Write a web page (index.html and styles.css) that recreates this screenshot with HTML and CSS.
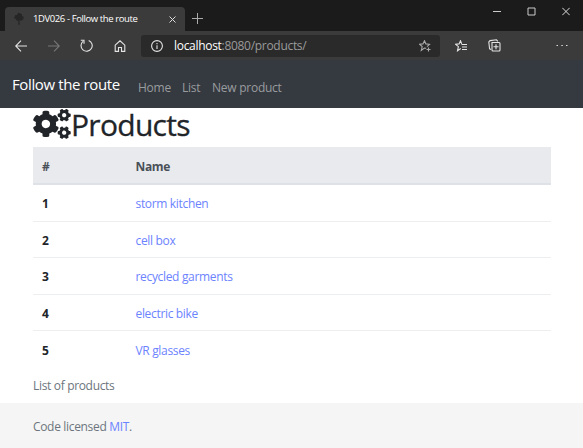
FILE: index.html
```
<!DOCTYPE html>
<html lang="en">
<head>
<meta charset="utf-8">
<title>1DV026 - Follow the route</title>
<link rel="stylesheet" href="styles.css">
</head>
<body>
<div class="tabs">
  <div class="tab">
    <svg class="favicon" width="12" height="14" viewBox="0 0 12 14"><path d="M5 1h2l1 1h1v2l2 1-1 1 1 1-2 1-1 1-1.5-1v3l.5 1-1 1-1-1 .5-1-.5-2-2-1v-1l-2-1 1-2V3h2z" fill="#262626"/></svg>
    <span class="tab-title">1DV026 - Follow the route</span>
    <svg class="tab-close" width="7" height="7" viewBox="0 0 7 7"><path d="M.5.5l6 6m0-6l-6 6" stroke="#ddd" fill="none"/></svg>
  </div>
  <svg class="plus" width="11" height="11" viewBox="0 0 11 11"><path d="M5.5 0v11M0 5.5h11" stroke="#aaa"/></svg>
  <div class="window-buttons">
    <svg width="8" height="9" viewBox="0 0 8 9"><path d="M0 4.5h8" stroke="#ccc"/></svg>
    <svg width="9" height="9" viewBox="0 0 9 9"><path d="M1 1h7v7H1z" stroke="#ccc" fill="none"/></svg>
    <svg width="8" height="9" viewBox="0 0 8 9"><path d="M.3.8l7.4 7.4m0-7.4L.3 8.2" stroke="#ddd"/></svg>
  </div>
</div>
<div class="toolbar">
  <svg class="icon back" width="12" height="12" viewBox="0 0 12 12"><path d="M12 6H.8M6 .7L.7 6 6 11.3"/></svg>
  <svg class="icon forward" width="12" height="12" viewBox="0 0 12 12"><path d="M0 6h11.2M6 .7L11.3 6 6 11.3"/></svg>
  <svg class="icon reload" width="13" height="13" viewBox="0 0 13 13"><path d="M8.7 1.4A5.6 5.6 0 1 1 3 2.3M.8 1.3H4v3.4"/></svg>
  <svg class="icon home" width="12" height="12" viewBox="0 0 12 12"><path d="M1.2 5.2L6 .8l4.8 4.4v6.2H7.5V7.5h-3v3.9H1.2z"/></svg>
  <div class="address">
    <svg class="icon info" width="12" height="12" viewBox="0 0 12 12"><circle cx="6" cy="6" r="5.4"/><path d="M6 5.2V9M6 3v1.2"/></svg>
    <span class="url"><b>localhost</b>:8080/products/</span>
    <svg class="icon star" width="12" height="12" viewBox="0 0 12 12"><path d="M7.2 8.3L5.4 8 2.3 10.4l.9-3.9L.6 4.3l3.3-.4L5.5.7l1.4 3.2 3.6.4L8 6.7M9.5 7.5v4M7.5 9.5h4"/></svg>
  </div>
  <svg class="icon favorites" width="13" height="12" viewBox="0 0 13 12"><path d="M5.8 8.5l-3.3 2.2.9-4L.7 4.3l3.4-.4L5.5.7l1.2 3.2M6.5 4.5H12M7 7h5M7 9.5h5"/></svg>
  <svg class="icon collections" width="13" height="13" viewBox="0 0 13 13"><path d="M4 3.5h7q1 0 1 1v6.5q0 1-1 1H5q-1 0-1-1zM8 5.3v5M5.5 7.8h5M3 10.5L1.6 9.8.8 3 2 1.6 8.5.8l1.3 1.6"/></svg>
  <svg class="dots" width="12" height="3" viewBox="0 0 12 3"><path d="M.5 1h1.5v1H.5zM5.3 1h1.5v1H5.3zM10 1h1.5v1H10z" fill="#ddd"/></svg>
</div>
<nav class="navbar">
  <a class="brand">Follow the route</a>
  <a class="link home-link">Home</a>
  <a class="link list-link">List</a>
  <a class="link new-link">New product</a>
</nav>
<main class="container">
  <h1 class="heading">
    <svg class="cogs" width="38" height="30" viewBox="0 0 640 512">
      <path id="cog" d="M512.1 191l-8.2 14.3c-3 5.3-9.4 7.5-15.1 5.4-11.8-4.4-22.6-10.7-32.1-18.6-4.6-3.8-5.8-10.5-2.8-15.7l8.2-14.3c-6.9-8-12.3-17.3-15.9-27.4h-16.5c-6 0-11.2-4.3-12.2-10.3-2-12-2.1-24.6 0-37.1 1-6 6.2-10.4 12.2-10.4h16.5c3.6-10.1 9-19.4 15.9-27.4l-8.2-14.3c-3-5.2-1.9-11.9 2.8-15.7 9.5-7.9 20.4-14.2 32.1-18.6 5.7-2.1 12.1.1 15.1 5.4l8.2 14.3c10.5-1.9 21.2-1.9 31.7 0L552 6.3c3-5.3 9.4-7.5 15.1-5.4 11.8 4.4 22.6 10.7 32.1 18.6 4.6 3.8 5.8 10.5 2.8 15.7l-8.2 14.3c6.9 8 12.3 17.3 15.9 27.4h16.5c6 0 11.2 4.3 12.2 10.3 2 12 2.1 24.6 0 37.1-1 6-6.2 10.4-12.2 10.4h-16.5c-3.6 10.1-9 19.4-15.9 27.4l8.2 14.3c3 5.2 1.9 11.9-2.8 15.7-9.5 7.9-20.4 14.2-32.1 18.6-5.7 2.1-12.1-.1-15.1-5.4l-8.2-14.3c-10.4 1.9-21.2 1.9-31.7 0zm-10.5-58.8c38.5 29.6 82.4-14.3 52.8-52.8-38.5-29.7-82.4 14.3-52.8 52.8z"/>
      <use href="#cog" y="299"/>
      <path d="M386.3 286.1l33.7 16.8c10.1 5.8 14.5 18.1 10.5 29.1-8.9 24.2-26.4 46.4-42.6 65.8-7.4 8.9-20.2 11.1-30.3 5.3l-29.1-16.8c-16 13.7-34.6 24.6-54.9 31.7v33.6c0 11.6-8.3 21.6-19.7 23.6-24.6 4.2-50.4 4.4-75.9 0-11.5-2-20-11.9-20-23.6V418c-20.3-7.2-38.9-18-54.9-31.7L74 403c-10 5.8-22.9 3.6-30.3-5.3-16.2-19.4-33.3-41.6-42.2-65.7-4-10.9.4-23.2 10.5-29.1l33.3-16.8c-3.9-20.9-3.9-42.4 0-63.4L12 205.8c-10.1-5.8-14.6-18.1-10.5-29 8.9-24.2 26-46.4 42.2-65.8 7.4-8.9 20.2-11.1 30.3-5.3l29.1 16.8c16-13.7 34.6-24.6 54.9-31.7V57.1c0-11.5 8.2-21.5 19.6-23.5 24.6-4.2 50.5-4.4 76-.1 11.5 2 20 11.9 20 23.6v33.6c20.3 7.2 38.9 18 54.9 31.7l29.1-16.8c10-5.8 22.9-3.6 30.3 5.3 16.2 19.4 33.2 41.6 42.1 65.8 4 10.9.1 23.2-10 29.1l-33.7 16.8c3.9 21 3.9 42.5 0 63.5zm-117.6 21.1c59.2-77-28.7-164.9-105.7-105.7-59.2 77 28.7 164.9 105.7 105.7z"/>
    </svg><span class="heading-text">Products</span>
  </h1>
  <table class="products">
    <thead><tr><th class="num">#</th><th>Name</th></tr></thead>
    <tbody>
      <tr><th>1</th><td><a>storm kitchen</a></td></tr>
      <tr><th>2</th><td><a>cell box</a></td></tr>
      <tr><th>3</th><td><a>recycled garments</a></td></tr>
      <tr><th>4</th><td><a>electric bike</a></td></tr>
      <tr><th>5</th><td><a>VR glasses</a></td></tr>
    </tbody>
  </table>
  <p class="caption">List of products</p>
</main>
<footer class="footer">Code licensed <a>MIT</a>.</footer>
</body>
</html>
```
FILE: styles.css
```
* { box-sizing: border-box; }
body {
  margin: 0;
  height: 448px;
  overflow: hidden;
  display: flex;
  flex-direction: column;
  background: #fff;
  color: #212529;
  font: 12px/18px "Open Sans", "Noto Sans", sans-serif;
  letter-spacing: -0.33px;
}
svg { display: block; flex: none; }
.tabs {
  height: 31px;
  flex: none;
  display: flex;
  background: #1b1b1b;
}
.tab {
  width: 180px;
  height: 24px;
  margin: 7px 0 0 5px;
  padding: 0 9px 0 8px;
  display: flex;
  align-items: center;
  background: #3b3b3b;
  border-radius: 4px 4px 0 0;
}
.tab-title {
  margin-left: 8px;
  color: #fff;
  font-size: 9.5px;
  letter-spacing: -0.4px;
  white-space: nowrap;
}
.tab-close { margin-left: auto; }
.plus { margin: 13px 0 0 7px; }
.window-buttons {
  display: flex;
  gap: 26px;
  margin: 7px 13px 0 auto;
}
.toolbar {
  height: 29px;
  flex: none;
  display: flex;
  align-items: center;
  padding: 0 15px;
  background: #3b3b3b;
}
.icon { fill: none; stroke: #e4e4e4; stroke-width: 1.1; }
.forward { margin-left: 21px; stroke: #777; }
.reload { margin-left: 20px; }
.home { margin-left: 21px; }
.address {
  width: 299px;
  height: 22px;
  margin-left: 15px;
  padding: 0 9px 0 10px;
  display: flex;
  align-items: center;
  background: #2a2a2a;
  border-radius: 3px;
}
.url { margin-left: 11px; color: #9a9a9a; letter-spacing: -0.3px; }
.url b { color: #fff; font-weight: 400; }
.star { margin-left: auto; stroke: #aaa; }
.favorites { margin-left: 15px; }
.collections { margin-left: 20px; }
.dots { margin-left: auto; }
.navbar {
  height: 48px;
  flex: none;
  display: flex;
  align-items: baseline;
  padding: 13px 12px 0;
  background: #353940;
  color: #999c9f;
  letter-spacing: -0.25px;
}
.brand { width: 126px; color: #fff; font-size: 15px; line-height: 22px; letter-spacing: -0.38px; }
.link { position: relative; top: 2px; }
.home-link { width: 44px; }
.list-link { width: 30px; }
.container { flex: none; width: 518px; margin-left: 33px; }
.heading {
  height: 39px;
  margin: 0;
  display: flex;
  font-size: 30px;
  line-height: 34px;
  font-weight: 500;
  letter-spacing: -0.7px;
}
.heading-text { -webkit-text-stroke: 0.3px #212529; }
.cogs { margin-top: 1px; fill: #212529; }
.products { width: 100%; table-layout: fixed; border-collapse: separate; border-spacing: 0; }
.products th, .products td { padding: 3px 9px 0; height: 36.5px; text-align: left; border-bottom: 1px solid #eceef0; }
.products .num { width: 93.5px; }
.products thead th { height: 38px; padding-top: 4px; background: #e9eaee; color: #495057; border-bottom: 2px solid #dee2e6; }
.products tbody tr:last-child > * { border-bottom: 0; }
a { text-decoration: none; }
td a, .footer a { color: #6c83ff; }
.caption { margin: 9px 0 0; color: #6c757d; }
.footer {
  flex: 1;
  margin-top: 8px;
  padding: 15px 33px 0;
  background: #f5f5f5;
  color: #6c757d;
}
```
